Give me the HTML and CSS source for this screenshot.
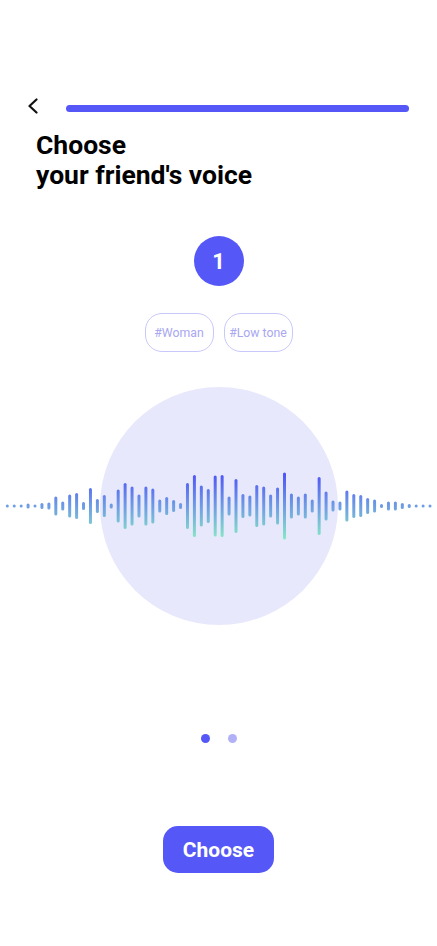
FILE: index.html
```html
<!DOCTYPE html>
<html lang="en">
<head>
<meta charset="utf-8">
<title>Choose your friend's voice</title>
<link rel="stylesheet" href="styles.css">
</head>
<body>
<div class="screen">
  <header class="topbar">
    <button class="back" aria-label="Back">
      <svg width="12" height="16" viewBox="0 0 12 16"><path d="M9.5 1.5 L2.5 8 L9.5 14.5" fill="none" stroke="#111" stroke-width="2.2" stroke-linecap="round" stroke-linejoin="round"/></svg>
    </button>
    <div class="progress"></div>
  </header>

  <h1 class="title">Choose<br>your friend's voice</h1>

  <div class="num">1</div>

  <div class="tags">
    <span class="tag">#Woman</span>
    <span class="tag">#Low tone</span>
  </div>

  <div class="stage">
    <div class="disc"></div>
    <svg class="wave" width="437" height="70" viewBox="0 0 437 70" id="wave">
      <defs>
        <linearGradient id="g" gradientUnits="userSpaceOnUse" x1="0" y1="1" x2="0" y2="69">
          <stop offset="0" stop-color="#4d50f7"/>
          <stop offset="0.5" stop-color="#6e9ce4"/>
          <stop offset="1" stop-color="#88eac4"/>
        </linearGradient>
      </defs>
      <g id="bars" fill="url(#g)"></g>
    </svg>
  </div>

  <div class="dots">
    <span class="dot on"></span>
    <span class="dot"></span>
  </div>

  <button class="choose">Choose</button>
</div>
<script>
  var hs=[3,3,3,5,3,6,7,19,9,23,26,8,36,14,22,5,33,46,39,23,39,35,13,18,12,6,46,62,41,34,61,62,19,54,24,21,42,39,23,37,67,25,19,25,13,58,29,11,9,31,24,22,16,13,4,9,9,6,4,3,3,3];
  var g=document.getElementById('bars');var out='';
  for(var i=0;i<hs.length;i++){var h=hs[i];var x=5.8+i*6.93;out+='<rect x="'+x.toFixed(2)+'" y="'+(35-h/2)+'" width="3" height="'+h+'" rx="1.5"/>';}
  g.innerHTML=out;
</script>
</body>
</html>
```

FILE: styles.css
```css
* { box-sizing: border-box; }
html, body { margin: 0; padding: 0; background: #fff; }
body { font-family: Roboto, "Noto Sans", Arial, sans-serif; color: #000; }

.screen {
  width: 437px;
  min-height: 946px;
  display: flex;
  flex-direction: column;
  align-items: center;
}

.topbar {
  align-self: stretch;
  display: flex;
  align-items: center;
  margin-top: 98px;
  height: 16px;
  padding: 0 28px 0 27px;
}
.back {
  border: 0;
  background: none;
  padding: 0;
  width: 12px;
  height: 16px;
  display: flex;
}
.progress {
  flex: 1;
  height: 7px;
  margin-left: 27px;
  margin-top: 4px;
  border-radius: 4px;
  background: #5557f6;
}

.title {
  align-self: stretch;
  margin: 16px 0 0;
  padding-left: 36px;
  font-size: 26.5px;
  line-height: 30px;
  font-weight: 700;
}

.num {
  margin-top: 46px;
  width: 50px;
  height: 50px;
  border-radius: 50%;
  background: #5557f6;
  color: #fff;
  font-weight: 700;
  font-size: 22px;
  display: flex;
  align-items: center;
  justify-content: center;
}

.tags {
  margin-top: 27px;
  display: flex;
  gap: 10px;
}
.tag {
  width: 69px;
  height: 39px;
  border: 1px solid #c9c8fb;
  border-radius: 17px;
  color: #a9a7f1;
  font-size: 12.3px;
  white-space: nowrap;
  display: flex;
  align-items: center;
  justify-content: center;
}

.stage {
  margin-top: 35px;
  width: 437px;
  height: 238px;
  display: grid;
  place-items: center;
}
.disc, .wave { grid-area: 1 / 1; }
.disc {
  width: 238px;
  height: 238px;
  margin-left: 1px;
  border-radius: 50%;
  background: #e8e8fc;
}
.wave { display: block; }

.dots {
  margin-top: 109px;
  display: flex;
  gap: 18px;
}
.dot {
  width: 9px;
  height: 9px;
  border-radius: 50%;
  background: #b2b1f8;
}
.dot.on { background: #5557f6; }

.choose {
  margin-top: 83px;
  width: 111px;
  height: 47px;
  border: 0;
  border-radius: 15px;
  background: #5557f6;
  color: #fff;
  font-family: Roboto, "Noto Sans", Arial, sans-serif;
  font-weight: 700;
  font-size: 21px;
  padding: 0;
}
```
